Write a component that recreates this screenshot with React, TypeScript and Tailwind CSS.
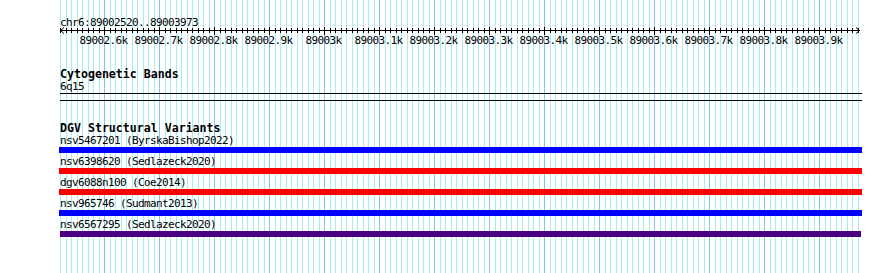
import React from "react";

const mono = "font-['DejaVu_Sans_Mono',monospace]";

const grid = Array.from({ length: 146 }, (_, k) => ({
  x: Math.round(60 + 5.5 * k) + 0.5,
  major: (2520 + 10 * k) % 100 === 0,
}));

const majors = Array.from({ length: 14 }, (_, i) => ({
  x: 104 + 55 * i,
  label: i === 4 ? "89003k" : i < 4 ? `89002.${6 + i}k` : `89003.${i - 4}k`,
}));

const features = [
  { label: "nsv5467201 (ByrskaBishop2022)", color: "bg-[#0000ff]", cls: "-ml-px w-[803px]" },
  { label: "nsv6398620 (Sedlazeck2020)", color: "bg-[#ff0000]", cls: "-ml-px w-[803px]" },
  { label: "dgv6088n100 (Coe2014)", color: "bg-[#ff0000]", cls: "-ml-px w-[803px]" },
  { label: "nsv965746 (Sudmant2013)", color: "bg-[#0000ff]", cls: "-ml-px w-[803px]" },
  { label: "nsv6567295 (Sedlazeck2020)", color: "bg-[#4b0082]", cls: "w-[801px]" },
];

const txt = "text-[11px] leading-[11px] tracking-[-0.62px] whitespace-pre";
const bold = "text-[11.6px] leading-[14px] font-bold whitespace-pre";

function GridBackdrop() {
  return (
    <svg
      className="absolute left-0 top-0"
      width={890}
      height={273}
      shapeRendering="crispEdges"
    >
      {grid.map((g, i) => (
        <line
          key={i}
          x1={g.x}
          x2={g.x}
          y1={0}
          y2={273}
          stroke={g.major ? "#87c4f0" : "#a8eeee"}
          strokeWidth={1}
        />
      ))}
    </svg>
  );
}

function Ruler() {
  return (
    <svg width={890} height={18} className="block overflow-visible" shapeRendering="crispEdges">
      <line x1={60} x2={860} y1={2.5} y2={2.5} stroke="#000" />
      {grid.map((g, i) => (
        <line
          key={i}
          x1={g.x}
          x2={g.x}
          y1={g.major ? -1 : 0}
          y2={g.major ? 7 : 5}
          stroke="#000"
        />
      ))}
      <polyline points="64,-0.5 60.5,2.5 64,5.5" fill="none" stroke="#000" shapeRendering="auto" />
      <polyline points="856,-0.5 859.5,2.5 856,5.5" fill="none" stroke="#000" shapeRendering="auto" />
      {majors.map((m) => (
        <text
          key={m.label}
          x={m.x - 0.5}
          y={16}
          textAnchor="middle"
          fontFamily="'DejaVu Sans Mono', monospace"
          fontSize={11}
          letterSpacing={-0.62}
          fill="#000"
        >
          {m.label}
        </text>
      ))}
    </svg>
  );
}

export default function App() {
  return (
    <div className="relative w-[890px] h-[273px] bg-white overflow-hidden">
      <GridBackdrop />
      <div className={`relative flex flex-col pt-[17px] text-black ${mono}`}>
        <div className={`pl-[60px] ${txt}`}>chr6:89002520..89003973</div>
        <Ruler />
        <div className={`mt-[21px] pl-[60px] ${bold}`}>Cytogenetic Bands</div>
        <div className={`pl-[60px] ${txt}`}>6q15</div>
        <div className="mt-[1px] ml-[60px] w-[802px] h-px bg-black" />
        <div className="mt-[6px] ml-[60px] w-[802px] h-px bg-black" />
        <div className={`mt-[20px] pl-[60px] ${bold}`}>DGV Structural Variants</div>
        <div className="flex flex-col pl-[60px]">
          {features.map((f) => (
            <div key={f.label} className="flex flex-col pb-[3px]">
              <div className={txt}>{f.label}</div>
              <div className={`mt-px h-[6px] ${f.color} ${f.cls}`} />
            </div>
          ))}
        </div>
      </div>
    </div>
  );
}
